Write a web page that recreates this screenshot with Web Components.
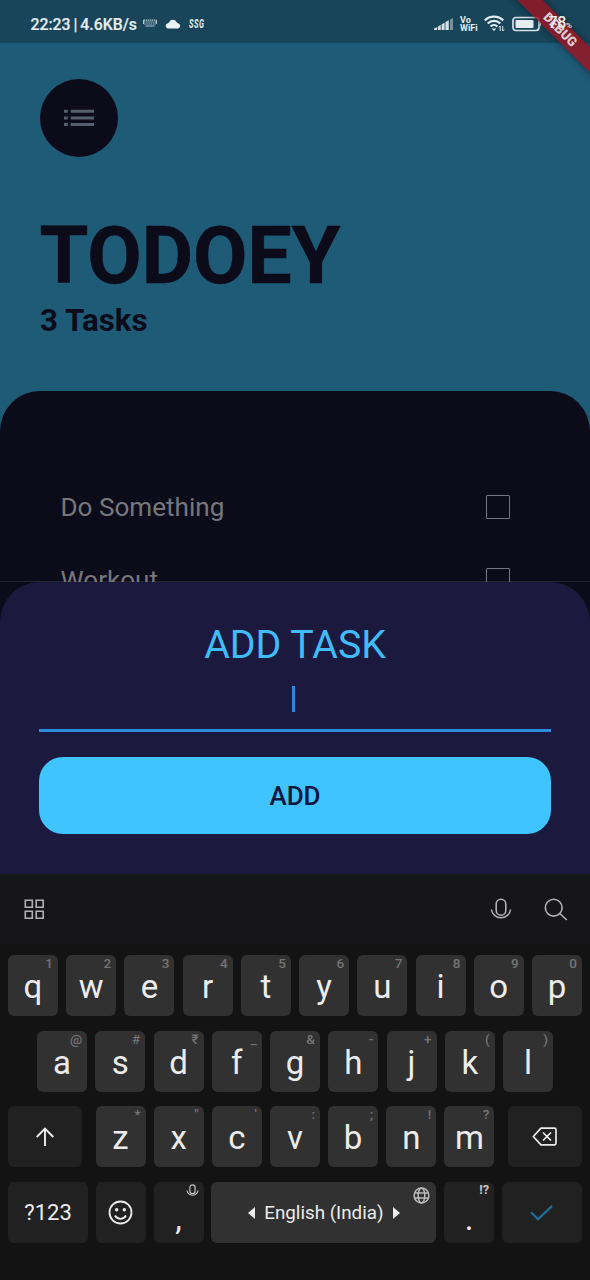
<!DOCTYPE html>
<html lang="en">
<head>
<meta charset="utf-8">
<title>Todoey</title>
<style>
html,body{margin:0;padding:0;background:#131313}
body{width:590px;height:1280px;overflow:hidden;font-family:Roboto,"Noto Sans",sans-serif}
</style>
</head>
<body>
<todo-app></todo-app>
<script>
function define(name, html, setup) {
  const template = document.createElement('template');
  template.innerHTML = html;
  customElements.define(name, class extends HTMLElement {
    connectedCallback() {
      if (this.shadowRoot) return;
      const root = this.attachShadow({ mode: 'open' });
      root.append(template.content.cloneNode(true));
      if (setup) setup(this, root);
    }
  });
}

define('status-bar', `
<style>
:host{display:flex;box-sizing:border-box;height:43px;padding:4px 16px 0 30.5px;background:#184559;color:#e4edf1;align-items:center;justify-content:space-between}
.g{display:flex;align-items:center}
.g.right{width:140px}
.g>*{flex:none}
.time{font-size:15.8px;font-weight:500;white-space:nowrap;line-height:20px;word-spacing:-1px;width:107px;padding-top:2px;-webkit-text-stroke:.2px}
.ssg{font:italic 700 12px/14px "Roboto",sans-serif;letter-spacing:.8px;transform:scaleX(.62);transform-origin:0 50%;margin-left:8px;padding-top:1px}
.vo{font-size:9px;line-height:8px;font-weight:700;margin-left:6px;width:18px;white-space:pre}
.pct{font-size:16px;font-weight:500;margin-left:6.5px;line-height:20px;white-space:nowrap;position:relative;z-index:2;padding-top:1px;letter-spacing:-.3px}
.pct small{font-size:8px}
svg{display:block}
</style>
<div class="g">
  <span class="time">22:23 | 4.6KB/s</span>
  <svg style="margin-left:5px" width="14" height="9" viewBox="0 0 14 9" fill="none" stroke="#b3c5ce"><path d="M.5 1.2h13M1 3h12M1.2 5h11.6" stroke-dasharray="1.5 .6" stroke-width="1.2"/><path d="M2.5 7h9M.5 1v4M13.5 1v4"/></svg>
  <svg style="margin-left:8.5px" width="16" height="10" viewBox="0 0 16 10" fill="#e9f2f6"><path d="M3 9.5a2.700 2.700 0 0 1-.2-5.300Q3.800 3.800 4.200 3A4 4 0 0 1 11.500 3Q12 3.900 13 4.200a2.700 2.700 0 0 1 0 5.300z"/></svg>
  <span class="ssg">SSG</span>
</div>
<div class="g right">
  <svg width="20" height="14" viewBox="0 0 20 14" fill="#d4e0e6"><path d="M0 13v-1.500l3-1.200V13zM3.800 13V9.500l3-1.500v5zM7.600 13V7.200l3-1.500V13zM11.400 13V5l3.400-1.700V13z"/><path opacity=".5" d="M16 13V2.500L19 1v12z"/></svg>
  <span class="vo">Vo
WiFi</span>
  <svg style="margin-left:6px" width="21" height="17" viewBox="0 0 21 17" fill="none" stroke="#e4edf1" stroke-width="2.200"><path d="M.8 5.400a13 13 0 0 1 18.400 0M3.700 8.500a9 9 0 0 1 12.600 0M6.600 11.500a5 5 0 0 1 6.800 0"/><path d="m7.500 13.500 2.500 2.500 2.500-2.500z" fill="#e4edf1" stroke="none"/><path stroke-width="1" d="M16.200 16v-5l-1.300 1.500M18.700 11v5l1.300-1.500"/></svg>
  <svg style="margin-left:7px" width="30" height="16" viewBox="0 0 30 16"><rect x="1" y="1.500" width="26" height="13" rx="3" fill="none" stroke="#d5e2e8" stroke-width="1.700"/><rect x="3.500" y="4" width="18" height="8" rx="1" fill="#e6eef2"/><path d="M28 5.500c1.500.7 1.500 4.300 0 5z" fill="#d5e2e8"/></svg>
  <span class="pct">78<small>%</small></span>
</div>`);

define('debug-banner', `
<style>
:host{position:absolute;right:0;top:0;width:110px;height:110px;overflow:hidden}
div{position:absolute;width:180px;height:18px;left:-10px;top:21px;transform:rotate(45deg);background:rgba(151,22,34,.84);box-shadow:0 0 7px rgba(0,0,0,.45);color:#dfccd2;font-size:13px;line-height:18px;font-weight:900;text-align:center}
</style><div>DEBUG</div>`);

define('todo-header', `
<style>
:host{display:flex;flex-direction:column;align-items:flex-start;box-sizing:border-box;height:348px;padding:36px 40px 0;color:#0c0b19}
.avatar{width:78px;height:78px;border-radius:50%;background:#0c0b19;display:flex;align-items:center;justify-content:center}
h1{margin:53px 0 0 -.5px;font-size:79px;line-height:92px;font-weight:700;letter-spacing:-.1px;white-space:nowrap;-webkit-text-stroke:.5px}
p{margin:0;font-size:31.300px;line-height:38px;font-weight:700}
</style>
<div class="avatar"><svg width="30" height="18" viewBox="0 0 30 18" fill="#55606e"><path d="M0 .8h3.800v3H0zM6.700.8H30v3H6.700zM0 7.500h3.800v3H0zM6.700 7.500H30v3H6.700zM0 14h3.800v3H0zM6.700 14H30v3H6.700z"/></svg></div>
<h1>TODOEY</h1>
<p>3 Tasks</p>`);

define('task-row', `
<style>
:host{display:flex;align-items:center;justify-content:space-between;height:73.500px;padding:0 80px 0 60.500px;color:#77767c;font-size:26.100px}
i{box-sizing:border-box;width:24px;height:24px;border:1.500px solid #77767c;border-radius:1px}
</style><slot></slot><i></i>`);

define('task-list', `
<style>
:host{display:block;box-sizing:border-box;height:260px;padding-top:79px;background:#0c0b19;border-radius:40px 40px 0 0;overflow:hidden}
</style><slot></slot>`);

define('add-task-sheet', `
<style>
:host{display:flex;flex-direction:column;box-sizing:border-box;height:292px;padding:39px 39px 0;background:#1b1a3e;border-radius:40px 40px 0 0}
h2{margin:0;text-align:center;font-size:39.300px;line-height:48px;font-weight:400;color:#40bcfb}
.field{box-sizing:border-box;height:63px;padding-top:17px;margin-bottom:25px;border-bottom:3px solid #2d8be0;display:flex;justify-content:center}
.caret{width:3px;height:26px;background:#2d85dc;margin-right:3px}
button{border:0;height:77px;border-radius:24px;background:#40c4ff;color:#10163d;font:500 26px/30px Roboto,sans-serif;padding:1px 0 0}
</style>
<h2>ADD TASK</h2><div class="field"><span class="caret"></span></div><button>ADD</button>`);

define('key-cap', `
<style>
:host{position:relative;display:flex;box-sizing:border-box;width:50px;height:61px;border-radius:6px;background:#313131;align-items:center;justify-content:center;color:#ececec;font-size:33px;line-height:38px;padding-top:3px;flex:none;white-space:nowrap}
:host([dark]){background:#212121}
:host([wide]){width:74px}
:host([side]){width:80px;font-size:22px;padding-top:1px}
:host([space]){width:225px;font-size:18.800px;padding-top:1px}
:host([low]){padding-top:13px}
b{position:absolute;right:5px;top:0;font-size:13.500px;line-height:16px;font-weight:500;color:#757575}
b:empty{display:none}
:host([bright]) b{color:#c9c9c9;font-size:12.800px;font-weight:700;right:5px}
::slotted(svg){display:block}
</style><slot></slot><b></b><slot name="hint"></slot>`, (el, root) => {
  root.querySelector('b').textContent = el.getAttribute('hint') || '';
});

define('soft-keyboard', `
<style>
:host{display:flex;flex-direction:column;height:406px;background:#131313;color:#ececec}
.tools{display:flex;align-items:center;height:70px;background:#161618;padding:0 22px 0 24px}
.tools svg:nth-child(2){margin-left:auto;margin-right:32px}
.rows{display:flex;flex-direction:column;gap:14.500px;padding:11px 8px 0}
.row{display:flex;justify-content:space-between}
.r2{padding:0 29px}
.mid{display:flex;justify-content:space-between;width:399px}
.lang{display:flex;align-items:center;gap:9px}
</style>
<div class="tools">
  <svg width="21" height="21" viewBox="0 0 21 21" fill="none" stroke="#b2b2b2" stroke-width="1.600"><path d="M1.300 1.300h7v7h-7zM12.200 1.300h7v7h-7zM1.300 12.200h7v7h-7zM12.200 12.200h7v7h-7z"/></svg>
  <svg width="22" height="23" viewBox="0 0 22 23" fill="none" stroke="#b2b2b2" stroke-width="1.600"><rect x="6.200" y="1.200" width="9.600" height="16" rx="4.800"/><path d="M1.400 11.500a9.700 9.700 0 0 0 19.200 0"/></svg>
  <svg width="24" height="23" viewBox="0 0 24 23" fill="none" stroke="#b2b2b2" stroke-width="1.600"><circle cx="9.700" cy="9.700" r="8.400"/><path d="m15.800 15.500 7 6.500"/></svg>
</div>
<div class="rows">
  <div class="row">
    <key-cap hint="1">q</key-cap><key-cap hint="2">w</key-cap><key-cap hint="3">e</key-cap><key-cap hint="4">r</key-cap><key-cap hint="5">t</key-cap><key-cap hint="6">y</key-cap><key-cap hint="7">u</key-cap><key-cap hint="8">i</key-cap><key-cap hint="9">o</key-cap><key-cap hint="0">p</key-cap>
  </div>
  <div class="row r2">
    <key-cap hint="@">a</key-cap><key-cap hint="#">s</key-cap><key-cap hint="₹">d</key-cap><key-cap hint="_">f</key-cap><key-cap hint="&amp;">g</key-cap><key-cap hint="-">h</key-cap><key-cap hint="+">j</key-cap><key-cap hint="(">k</key-cap><key-cap hint=")">l</key-cap>
  </div>
  <div class="row">
    <key-cap dark wide><svg style="margin-top:-3px" width="19" height="20" viewBox="0 0 19 20" fill="none" stroke="#ececec" stroke-width="1.900"><path d="M9 19V1.500M.7 10 9 1.500l8.300 8.500"/></svg></key-cap>
    <div class="mid"><key-cap hint="*">z</key-cap><key-cap hint="&quot;">x</key-cap><key-cap hint="'">c</key-cap><key-cap hint=":">v</key-cap><key-cap hint=";">b</key-cap><key-cap hint="!">n</key-cap><key-cap hint="?">m</key-cap></div>
    <key-cap dark wide><svg style="margin-top:-3px" width="26" height="19" viewBox="0 0 26 19" fill="none" stroke="#ececec" stroke-width="1.700" stroke-linejoin="round"><path d="M9 1.200h13.500a1.500 1.500 0 0 1 1.500 1.500v13.600a1.500 1.500 0 0 1-1.500 1.500H9L1.300 9.500zM11 5.500l8 8M19 5.500l-8 8"/></svg></key-cap>
  </div>
  <div class="row">
    <key-cap dark side>?123</key-cap>
    <key-cap dark><svg style="margin-top:-3px" width="25" height="25" viewBox="0 0 25 25" fill="none" stroke="#ececec" stroke-width="1.800"><circle cx="12.500" cy="12.500" r="11"/><path d="M7 15.500a6.200 6.200 0 0 0 11 0"/><g fill="#ececec" stroke="none"><circle cx="8.700" cy="9.700" r="1.700"/><circle cx="16.300" cy="9.700" r="1.700"/></g></svg></key-cap>
    <key-cap dark low>,<svg slot="hint" style="position:absolute;right:5px;top:2px" width="13" height="13" viewBox="0 0 13 13" fill="none" stroke="#c4c4c4" stroke-width="1.200"><rect x="3.900" y=".8" width="5.200" height="8.700" rx="2.600"/><path d="M1 6.500a5.600 5.600 0 0 0 11 0"/></svg></key-cap>
    <key-cap space><span class="lang"><svg width="7" height="12" viewBox="0 0 7 12" fill="#ececec"><path d="M7 0v12L0 6z"/></svg><span>English (India)</span><svg width="7" height="12" viewBox="0 0 7 12" fill="#ececec"><path d="M0 0v12l7-6z"/></svg></span><svg slot="hint" style="position:absolute;right:6px;top:5px" width="17" height="17" viewBox="0 0 17 17" fill="none" stroke="#bcbcbc" stroke-width="1.500"><circle cx="8.500" cy="8.500" r="7.400"/><ellipse cx="8.500" cy="8.500" rx="3.300" ry="7.400"/><path d="M1.700 6h13.600M1.700 11h13.600"/></svg></key-cap>
    <key-cap dark low bright hint="!?">.</key-cap>
    <key-cap dark side><svg width="23" height="16" viewBox="0 0 23 16" fill="none" stroke="#1d72a0" stroke-width="2.100"><path d="m1 7.300 7 7L22 1"/></svg></key-cap>
  </div>
</div>`);

define('todo-app', `
<style>
:host{display:block;position:relative;width:590px;height:1280px;overflow:hidden;background:#1e5b77}
.screen{height:582px;overflow:hidden}
.sheet{background:#0c0b19;box-shadow:0 -1px #24232f}
</style>
<div class="screen"><status-bar></status-bar><todo-header></todo-header>
<task-list><task-row>Do Something</task-row><task-row>Workout</task-row></task-list></div>
<div class="sheet"><add-task-sheet></add-task-sheet></div>
<soft-keyboard></soft-keyboard>
<debug-banner></debug-banner>`);
</script>
</body>
</html>
